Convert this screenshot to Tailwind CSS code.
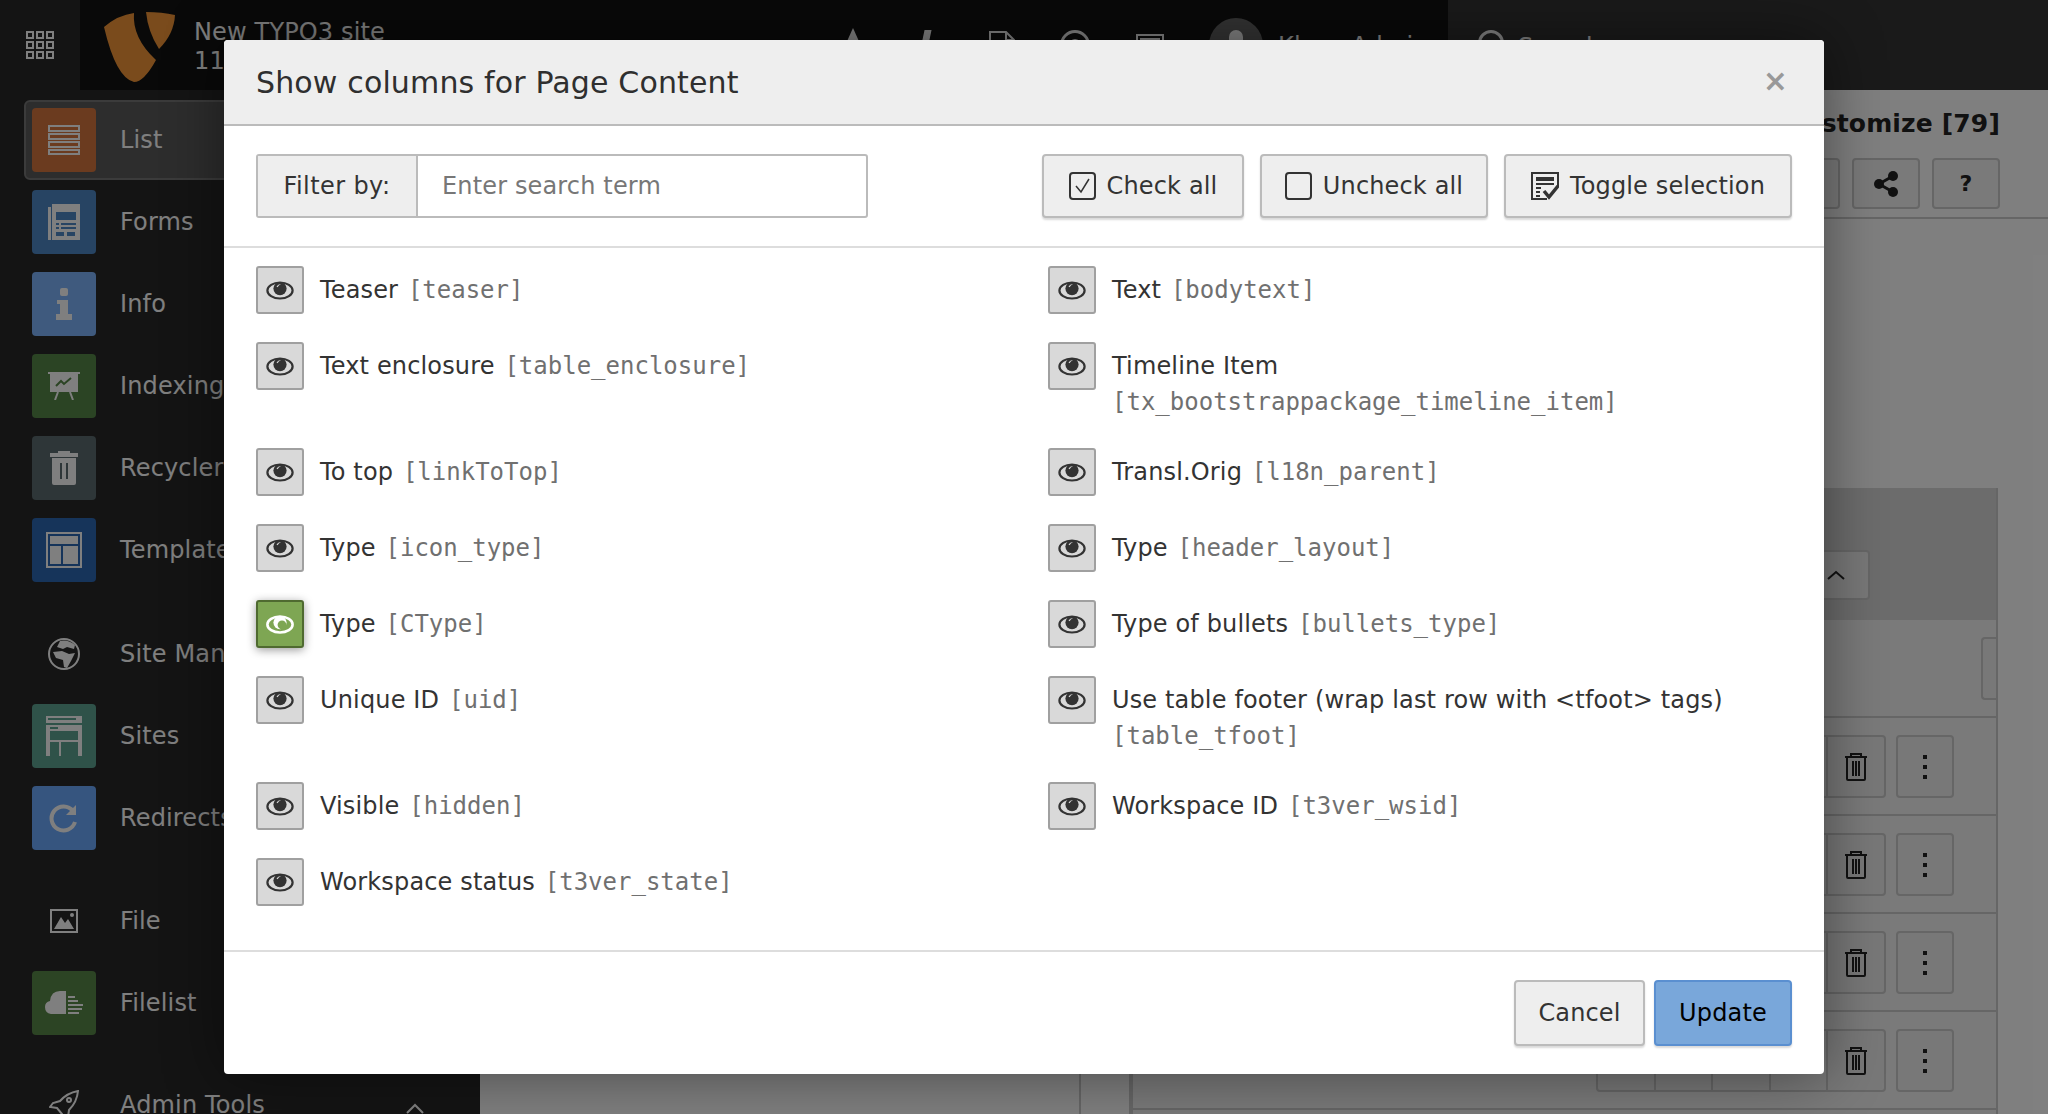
<!DOCTYPE html>
<html lang="en">
<head>
    <meta charset="UTF-8">
    <title>Show columns for Page Content</title>
    <script src="https://cdn.jsdelivr.net/npm/@tailwindcss/browser@4"></script>
</head>
<body class="font-['DejaVu_Sans',sans-serif] text-[24px] tracking-[0.15px] text-[#333] bg-white">
    <svg class="hidden">
        <symbol id="eye" viewBox="0 0 28 20">
            <ellipse cx="14" cy="10.5" rx="12.6" ry="8" fill="none" stroke="#333" stroke-width="2.2"/>
            <circle cx="14" cy="8.6" r="6.6" fill="#333"/>
            <path d="M10.5 6.6 Q12 3.8 15 3.9 Q12.4 5 11.6 7.2 Z" fill="#d9d9d9"/>
        </symbol>
    </svg>

    <div class="relative w-[2048px] h-[1114px] overflow-hidden flex flex-col">
        <!-- topbar -->
        <header class="h-[90px] flex shrink-0 text-white">
            <div class="w-[80px] bg-[#282828] flex items-center justify-center">
                <div class="grid grid-cols-3 gap-[2px] w-[28px]">
                    <i class="h-[8px] border-2 border-white"></i><i class="h-[8px] border-2 border-white"></i><i class="h-[8px] border-2 border-white"></i>
                    <i class="h-[8px] border-2 border-white"></i><i class="h-[8px] border-2 border-white"></i><i class="h-[8px] border-2 border-white"></i>
                    <i class="h-[8px] border-2 border-white"></i><i class="h-[8px] border-2 border-white"></i><i class="h-[8px] border-2 border-white"></i>
                </div>
            </div>
            <div class="w-[1368px] bg-[#121212] flex items-start relative">
                <svg class="ml-[24px] mt-[12px]" width="72" height="71" viewBox="0 0 72 71">
                    <path d="M0 15 Q14 3 30 1 Q28 26 52 48 Q40 70 30 70 Q12 66 0 15 Z" fill="#f49738"/>
                    <path d="M42 0 Q58 0 71 3 Q70 22 55 37 Q44 20 42 0 Z" fill="#f49738"/>
                </svg>
                <div class="ml-[18px] mt-[18px] leading-[29px]">
                    <div>New TYPO3 site</div>
                    <div>11.5.3</div>
                </div>
                <div class="absolute left-[0] top-0 h-full w-full pointer-events-none">
                    <div class="absolute left-[764px] top-[28px] w-0 h-0 border-x-[9px] border-x-transparent border-b-[20px] border-b-white"></div>
                    <div class="absolute left-[842px] top-[30px] w-[7px] h-[24px] bg-white -skew-x-12"></div>
                    <svg class="absolute left-[909px] top-[31px]" width="26" height="30" viewBox="0 0 26 30" fill="none" stroke="#fff" stroke-width="2"><path d="M1 1H17L25 9V29H1Z"/><path d="M17 1V9H25"/></svg>
                    <div class="absolute left-[980px] top-[30px] w-[30px] h-[30px] rounded-full border-[3px] border-white flex items-center justify-center"><span class="w-[12px] h-[12px] rounded-full bg-white"></span></div>
                    <div class="absolute left-[1056px] top-[34px] w-[28px] h-[24px] border-2 border-white"><span class="block mt-[2px] mx-[2px] h-[4px] bg-white"></span></div>
                    <div class="absolute left-[1129px] top-[18px] w-[54px] h-[54px] rounded-full bg-[#666] flex justify-center">
                        <span class="mt-[12px] w-[14px] h-[24px] rounded-full bg-white"></span>
                    </div>
                    <div class="absolute left-[1198px] top-[28px]">Klaus Admin</div>
                </div>
            </div>
            <div class="flex-1 bg-[#343434] flex items-start pl-[30px] pt-[30px] gap-[14px]">
                <span class="w-[26px] h-[26px] rounded-full border-[3px] border-white"></span>
                <span class="-mt-px">Search</span>
            </div>
        </header>

        <div class="flex flex-1 min-h-0">
            <!-- module menu -->
            <aside class="w-[480px] shrink-0 bg-[#282828] text-white pt-[9px] overflow-hidden flex flex-col *:shrink-0">
                <div class="h-[80px] my-px ml-6 pl-[6px] flex items-center gap-6 border-2 border-[#777] rounded-[6px] bg-[#5a5a5a]">
                    <span class="w-16 h-16 rounded-[4px] bg-[#d6763e] flex items-center justify-center">
                        <svg width="32" height="30" viewBox="0 0 32 30" fill="none" stroke="#fff" stroke-width="2"><rect x="1" y="1" width="30" height="5"/><rect x="1" y="9" width="30" height="5"/><rect x="1" y="17" width="30" height="5"/><rect x="1" y="25" width="30" height="4"/></svg>
                    </span>
                    List
                </div>
                <div class="h-[80px] my-px ml-6 pl-[6px] flex items-center gap-6 border-2 border-transparent">
                    <span class="w-16 h-16 rounded-[4px] bg-[#4e88c6] flex items-center justify-center">
                        <svg width="32" height="36" viewBox="0 0 32 36"><rect x="0" y="3" width="3" height="33" fill="#fff"/><rect x="4" y="0" width="28" height="36" fill="#fff"/><rect x="8" y="8" width="20" height="8" fill="#4e88c6"/><rect x="8" y="19" width="3" height="2" fill="#4e88c6"/><rect x="13" y="19" width="15" height="2" fill="#4e88c6"/><rect x="8" y="23" width="3" height="2" fill="#4e88c6"/><rect x="13" y="23" width="15" height="2" fill="#4e88c6"/><rect x="8" y="28" width="8" height="4" fill="#4e88c6"/><rect x="19" y="28" width="8" height="4" fill="#4e88c6"/></svg>
                    </span>
                    Forms
                </div>
                <div class="h-[80px] my-px ml-6 pl-[6px] flex items-center gap-6 border-2 border-transparent">
                    <span class="w-16 h-16 rounded-[4px] bg-[#7eb4fc] flex items-center justify-center">
                        <svg width="16" height="32" viewBox="0 0 16 32" fill="#fff"><rect x="4" y="0" width="8" height="8" rx="2"/><path d="M1 12H12V26H16V32H0V26H4V16H1Z"/></svg>
                    </span>
                    Info
                </div>
                <div class="h-[80px] my-px ml-6 pl-[6px] flex items-center gap-6 border-2 border-transparent">
                    <span class="w-16 h-16 rounded-[4px] bg-[#568849] flex items-center justify-center">
                        <svg width="32" height="28" viewBox="0 0 32 28"><rect x="0" y="0" width="32" height="2" fill="#fff"/><rect x="2" y="2" width="28" height="18" fill="#fff"/><path d="M8 14 L13 9 L16 12 L23 6" fill="none" stroke="#568849" stroke-width="2"/><path d="M10 20 L7 28 M22 20 L25 28" stroke="#fff" stroke-width="2"/></svg>
                    </span>
                    Indexing
                </div>
                <div class="h-[80px] my-px ml-6 pl-[6px] flex items-center gap-6 border-2 border-transparent">
                    <span class="w-16 h-16 rounded-[4px] bg-[#5c6c70] flex items-center justify-center">
                        <svg width="28" height="34" viewBox="0 0 28 34" fill="#fff"><path d="M8 0H20V2H28V6H0V2H8Z"/><path d="M2 7H26V32Q26 34 24 34H4Q2 34 2 32Z"/><rect x="10" y="12" width="2" height="16" fill="#5c6c70"/><rect x="16" y="12" width="2" height="16" fill="#5c6c70"/></svg>
                    </span>
                    Recycler
                </div>
                <div class="h-[80px] my-px ml-6 pl-[6px] flex items-center gap-6 border-2 border-transparent">
                    <span class="w-16 h-16 rounded-[4px] bg-[#2c68b4] flex items-center justify-center">
                        <svg width="36" height="36" viewBox="0 0 36 36"><rect x="1" y="1" width="34" height="34" fill="none" stroke="#fff" stroke-width="2"/><rect x="4" y="4" width="28" height="8" fill="#fff"/><rect x="4" y="14" width="11" height="18" fill="#fff"/><rect x="17" y="14" width="15" height="18" fill="#fff"/></svg>
                    </span>
                    Template
                </div>

                <div class="h-[80px] mt-[23px] mb-px ml-6 pl-[6px] flex items-center gap-6 border-2 border-transparent">
                    <span class="w-16 h-16 flex items-center justify-center">
                        <svg width="32" height="32" viewBox="0 0 32 32"><circle cx="16" cy="16" r="15" fill="none" stroke="#fff" stroke-width="2"/><path d="M12 3 Q20 1 27 7 L26 11 L19 9 L15 11 L9 9 Z M5 14 L14 13 L21 16 L27 15 L23 23 L19 30 L16 29 L15 22 L8 20 Z" fill="#fff"/></svg>
                    </span>
                    Site Management
                </div>
                <div class="h-[80px] my-px ml-6 pl-[6px] flex items-center gap-6 border-2 border-transparent">
                    <span class="w-16 h-16 rounded-[4px] bg-[#5ea492] flex items-center justify-center">
                        <svg width="36" height="40" viewBox="0 0 36 40"><rect x="0" y="0" width="36" height="7" fill="#fff"/><rect x="2" y="2" width="28" height="2" fill="#5ea492"/><rect x="0" y="9" width="36" height="6" fill="#fff"/><rect x="4" y="11" width="8" height="2" fill="#5ea492"/><rect x="0" y="15" width="4" height="25" fill="#fff"/><rect x="32" y="15" width="4" height="25" fill="#fff"/><rect x="4" y="24" width="28" height="2" fill="#fff"/><rect x="13" y="26" width="2" height="14" fill="#fff"/></svg>
                    </span>
                    Sites
                </div>
                <div class="h-[80px] my-px ml-6 pl-[6px] flex items-center gap-6 border-2 border-transparent">
                    <span class="w-16 h-16 rounded-[4px] bg-[#6caaff] flex items-center justify-center">
                        <svg width="30" height="30" viewBox="0 0 30 30"><path d="M24 8 A12 12 0 1 0 26 19" fill="none" stroke="#fff" stroke-width="4"/><path d="M27 2 V12 H17 Z" fill="#fff"/></svg>
                    </span>
                    Redirects
                </div>

                <div class="h-[80px] mt-[22px] mb-px ml-6 pl-[6px] flex items-center gap-6 border-2 border-transparent">
                    <span class="w-16 h-16 flex items-center justify-center">
                        <svg width="28" height="24" viewBox="0 0 28 24"><rect x="1" y="1" width="26" height="22" fill="none" stroke="#fff" stroke-width="2"/><circle cx="22" cy="6" r="2" fill="#fff"/><path d="M4 20 L11 8 L15 14 L18 10 L24 20 Z" fill="#fff"/></svg>
                    </span>
                    File
                </div>
                <div class="h-[80px] my-px ml-6 pl-[6px] flex items-center gap-6 border-2 border-transparent">
                    <span class="w-16 h-16 rounded-[4px] bg-[#588848] flex items-center justify-center">
                        <svg width="38" height="24" viewBox="0 0 38 24" fill="#fff"><path d="M21 0 V23 H6 Q0 22 0 16 Q0 11 5 10 Q6 0 15 0 Z"/><rect x="23" y="5" width="7" height="2"/><rect x="23" y="9" width="10" height="2"/><rect x="23" y="13" width="15" height="2"/><rect x="23" y="17" width="14" height="2"/><rect x="23" y="21" width="11" height="2"/></svg>
                    </span>
                    Filelist
                </div>
                <div class="h-[80px] mt-[21px] ml-6 pl-[6px] pr-[53px] flex items-center gap-6 border-2 border-transparent">
                    <span class="w-16 h-16 flex items-center justify-center">
                        <svg width="30" height="30" viewBox="0 0 30 30" fill="none" stroke="#fff" stroke-width="2"><path d="M29 1 Q18 3 11 11 L4 13 L1 17 L8 18 L13 24 L15 30 L19 27 L20 20 Q28 12 29 1 Z"/><circle cx="20" cy="10" r="2"/></svg>
                    </span>
                    Admin Tools
                    <svg class="ml-auto mt-[6px]" width="20" height="12" viewBox="0 0 20 12" fill="none" stroke="#fff" stroke-width="2"><path d="M2 11 L10 3 L18 11"/></svg>
                </div>
            </aside>

            <!-- content behind the modal -->
            <main class="flex-1 bg-white flex min-w-0">
                <div class="w-[601px] border-r-2 border-[#ccc] shrink-0"></div>
                <div class="w-[50px] border-r-2 border-[#ccc] shrink-0"></div>
                <div class="flex-1 flex flex-col min-w-0">
                    <div class="h-[129px] shrink-0 border-b-2 border-[#ccc] flex flex-col items-end pr-[48px] text-[#222] font-bold">
                        <div class="mt-[17px] leading-[34px] text-[25px]">Customize [79]</div>
                        <div class="mt-[17px] flex gap-3">
                            <span class="w-[68px] h-[51px] border-2 border-[#ccc] rounded-[4px] bg-[#f4f4f4]"></span>
                            <span class="w-[68px] h-[51px] border-2 border-[#ccc] rounded-[4px] bg-[#f4f4f4] flex items-center justify-center">
                                <svg width="26" height="26" viewBox="0 0 26 26" fill="#222"><circle cx="6" cy="13" r="5"/><circle cx="20" cy="5" r="5"/><circle cx="20" cy="21" r="5"/><path d="M6 13 L20 5 M6 13 L20 21" stroke="#222" stroke-width="3"/></svg>
                            </span>
                            <span class="w-[68px] h-[51px] border-2 border-[#ccc] rounded-[4px] bg-[#f4f4f4] flex items-center justify-center text-[22px]">?</span>
                        </div>
                    </div>
                    <div class="mr-[50px] mt-[269px] border-x-2 border-[#ccc] bg-[#f4f4f4] flex-1">
                        <div class="h-[132px] bg-[#d8d8d8] flex justify-end items-end pr-[126px] pb-[20px]">
                            <span class="w-[100px] h-[50px] border-2 border-[#ccc] rounded-[4px] bg-[#f0f0f0] flex items-center justify-end pr-[23px]">
                                <svg width="18" height="10" viewBox="0 0 18 10" fill="none" stroke="#222" stroke-width="2"><path d="M1 9 L9 2 L17 9"/></svg>
                            </span>
                        </div>
                        <div class="h-[98px] border-b-2 border-[#ccc] flex justify-end pt-[17px]">
                            <span class="w-[15px] h-[63px] border-2 border-r-0 border-[#ccc] rounded-l-[4px] bg-[#f0f0f0]"></span>
                        </div>
                        <div class="h-[98px] border-b-2 border-[#ccc] flex justify-end pt-[17px] pr-[42px]">
                            <div class="flex w-[290px] h-[63px] border-2 border-[#ccc] rounded-[4px] bg-[#f0f0f0] divide-x-2 divide-[#ccc]"><span class="flex-1"></span><span class="flex-1"></span><span class="flex-1"></span><span class="flex-1"></span><span class="flex-1 flex items-center justify-center"><svg width="24" height="28" viewBox="0 0 24 28" fill="none" stroke="#222" stroke-width="2"><path d="M1 4H23M7 4V1H17V4M3 4V26Q3 27 4 27H20Q21 27 21 26V4M9 8V23M12 8V23M15 8V23"/></svg></span></div>
                            <span class="ml-[10px] w-[58px] h-[63px] border-2 border-[#ccc] rounded-[4px] bg-[#f0f0f0] flex flex-col items-center justify-center gap-[6px]"><i class="w-[4px] h-[4px] bg-[#222]"></i><i class="w-[4px] h-[4px] bg-[#222]"></i><i class="w-[4px] h-[4px] bg-[#222]"></i></span>
                        </div>
                        <div class="h-[98px] border-b-2 border-[#ccc] flex justify-end pt-[17px] pr-[42px]">
                            <div class="flex w-[290px] h-[63px] border-2 border-[#ccc] rounded-[4px] bg-[#f0f0f0] divide-x-2 divide-[#ccc]"><span class="flex-1"></span><span class="flex-1"></span><span class="flex-1"></span><span class="flex-1"></span><span class="flex-1 flex items-center justify-center"><svg width="24" height="28" viewBox="0 0 24 28" fill="none" stroke="#222" stroke-width="2"><path d="M1 4H23M7 4V1H17V4M3 4V26Q3 27 4 27H20Q21 27 21 26V4M9 8V23M12 8V23M15 8V23"/></svg></span></div>
                            <span class="ml-[10px] w-[58px] h-[63px] border-2 border-[#ccc] rounded-[4px] bg-[#f0f0f0] flex flex-col items-center justify-center gap-[6px]"><i class="w-[4px] h-[4px] bg-[#222]"></i><i class="w-[4px] h-[4px] bg-[#222]"></i><i class="w-[4px] h-[4px] bg-[#222]"></i></span>
                        </div>
                        <div class="h-[98px] border-b-2 border-[#ccc] flex justify-end pt-[17px] pr-[42px]">
                            <div class="flex w-[290px] h-[63px] border-2 border-[#ccc] rounded-[4px] bg-[#f0f0f0] divide-x-2 divide-[#ccc]"><span class="flex-1"></span><span class="flex-1"></span><span class="flex-1"></span><span class="flex-1"></span><span class="flex-1 flex items-center justify-center"><svg width="24" height="28" viewBox="0 0 24 28" fill="none" stroke="#222" stroke-width="2"><path d="M1 4H23M7 4V1H17V4M3 4V26Q3 27 4 27H20Q21 27 21 26V4M9 8V23M12 8V23M15 8V23"/></svg></span></div>
                            <span class="ml-[10px] w-[58px] h-[63px] border-2 border-[#ccc] rounded-[4px] bg-[#f0f0f0] flex flex-col items-center justify-center gap-[6px]"><i class="w-[4px] h-[4px] bg-[#222]"></i><i class="w-[4px] h-[4px] bg-[#222]"></i><i class="w-[4px] h-[4px] bg-[#222]"></i></span>
                        </div>
                        <div class="h-[98px] border-b-2 border-[#ccc] flex justify-end pt-[17px] pr-[42px]">
                            <div class="flex w-[290px] h-[63px] border-2 border-[#ccc] rounded-[4px] bg-[#f0f0f0] divide-x-2 divide-[#ccc]"><span class="flex-1"></span><span class="flex-1"></span><span class="flex-1"></span><span class="flex-1"></span><span class="flex-1 flex items-center justify-center"><svg width="24" height="28" viewBox="0 0 24 28" fill="none" stroke="#222" stroke-width="2"><path d="M1 4H23M7 4V1H17V4M3 4V26Q3 27 4 27H20Q21 27 21 26V4M9 8V23M12 8V23M15 8V23"/></svg></span></div>
                            <span class="ml-[10px] w-[58px] h-[63px] border-2 border-[#ccc] rounded-[4px] bg-[#f0f0f0] flex flex-col items-center justify-center gap-[6px]"><i class="w-[4px] h-[4px] bg-[#222]"></i><i class="w-[4px] h-[4px] bg-[#222]"></i><i class="w-[4px] h-[4px] bg-[#222]"></i></span>
                        </div>
                    </div>
                </div>
            </main>
        </div>

        <!-- backdrop and modal -->
        <div class="absolute inset-0 bg-black/50"></div>
        <div class="absolute left-[224px] top-[40px] w-[1600px] h-[1034px] bg-white rounded-[4px] flex flex-col shadow-[0_0_60px_rgba(0,0,0,0.45)]">
            <div class="h-[86px] shrink-0 bg-[#eee] border-b-2 border-[#bbb] rounded-t-[4px] flex items-center justify-between pl-8 pr-[36px]">
                <h2 class="text-[30px] text-[#2f2f2f]">Show columns for Page Content</h2>
                <span class="-mt-[2px] text-[30px] font-bold text-[#999] leading-none">×</span>
            </div>

            <div class="h-[122px] shrink-0 border-b-2 border-[#ddd] flex items-center justify-between px-8">
                <div class="flex w-[612px] h-[64px] border-2 border-[#bbb] rounded-[3px]">
                    <span class="w-[160px] shrink-0 bg-[#eee] border-r-2 border-[#bbb] flex items-center justify-center tracking-[0.4px]">Filter by:</span>
                    <input class="flex-1 min-w-0 px-6 outline-none placeholder:text-[#777]" placeholder="Enter search term">
                </div>
                <div class="flex gap-[16px]">
                    <button class="h-[64px] w-[202px] bg-[#eee] border-2 border-[#bbb] rounded-[4px] shadow-[0_2px_2px_rgba(0,0,0,0.15)] flex items-center justify-center gap-[11px]">
                        <svg width="27" height="28" viewBox="0 0 27 28" fill="none" stroke="#333"><rect x="1" y="1" width="25" height="26" rx="3" stroke-width="2"/><path d="M7 14 L12 20 L20 7" stroke-width="1.5"/></svg>
                        Check all
                    </button>
                    <button class="h-[64px] w-[228px] bg-[#eee] border-2 border-[#bbb] rounded-[4px] shadow-[0_2px_2px_rgba(0,0,0,0.15)] flex items-center justify-center gap-[11px]">
                        <svg width="27" height="28" viewBox="0 0 27 28" fill="none" stroke="#333"><rect x="1" y="1" width="25" height="26" rx="3" stroke-width="2"/></svg>
                        Uncheck all
                    </button>
                    <button class="h-[64px] w-[288px] bg-[#eee] border-2 border-[#bbb] rounded-[4px] shadow-[0_2px_2px_rgba(0,0,0,0.15)] flex items-center justify-center gap-[11px]">
                        <svg width="28" height="28" viewBox="0 0 28 28"><path d="M16 27H1V1H27V15" fill="none" stroke="#333" stroke-width="2"/><rect x="5" y="5" width="18" height="4" fill="#333"/><rect x="5" y="11" width="18" height="2" fill="#333"/><path d="M5 16H10M5 20H9M5 24H9" stroke="#333" stroke-width="2"/><path d="M13 19 L18 25 L27 14" fill="none" stroke="#333" stroke-width="3.5"/></svg>
                        Toggle selection
                    </button>
                </div>
            </div>

            <div class="flex-1 min-h-0 pt-[18px] pl-8 grid grid-cols-[792px_1fr] content-start">
                <label class="flex gap-4 pb-[28px]">
                    <span class="w-12 h-12 shrink-0 border-2 border-[#a0a0a0] rounded-[3px] bg-[#d9d9d9] flex items-center justify-center"><svg width="28" height="20"><use href="#eye"/></svg></span>
                    <span class="pt-[6px] leading-9">Teaser <span class="ml-[2px] font-['DejaVu_Sans_Mono',monospace] tracking-normal text-[#707070]">[teaser]</span></span>
                </label>
                <label class="flex gap-4 pb-[28px]">
                    <span class="w-12 h-12 shrink-0 border-2 border-[#a0a0a0] rounded-[3px] bg-[#d9d9d9] flex items-center justify-center"><svg width="28" height="20"><use href="#eye"/></svg></span>
                    <span class="pt-[6px] leading-9">Text <span class="ml-[2px] font-['DejaVu_Sans_Mono',monospace] tracking-normal text-[#707070]">[bodytext]</span></span>
                </label>
                <label class="flex gap-4 pb-[28px]">
                    <span class="w-12 h-12 shrink-0 border-2 border-[#a0a0a0] rounded-[3px] bg-[#d9d9d9] flex items-center justify-center"><svg width="28" height="20"><use href="#eye"/></svg></span>
                    <span class="pt-[6px] leading-9">Text enclosure <span class="ml-[2px] font-['DejaVu_Sans_Mono',monospace] tracking-normal text-[#707070]">[table_enclosure]</span></span>
                </label>
                <label class="flex gap-4 pb-[28px]">
                    <span class="w-12 h-12 shrink-0 border-2 border-[#a0a0a0] rounded-[3px] bg-[#d9d9d9] flex items-center justify-center"><svg width="28" height="20"><use href="#eye"/></svg></span>
                    <span class="pt-[6px] leading-9">Timeline Item <span class="block font-['DejaVu_Sans_Mono',monospace] tracking-normal text-[#707070]">[tx_bootstrappackage_timeline_item]</span></span>
                </label>
                <label class="flex gap-4 pb-[28px]">
                    <span class="w-12 h-12 shrink-0 border-2 border-[#a0a0a0] rounded-[3px] bg-[#d9d9d9] flex items-center justify-center"><svg width="28" height="20"><use href="#eye"/></svg></span>
                    <span class="pt-[6px] leading-9">To top <span class="ml-[2px] font-['DejaVu_Sans_Mono',monospace] tracking-normal text-[#707070]">[linkToTop]</span></span>
                </label>
                <label class="flex gap-4 pb-[28px]">
                    <span class="w-12 h-12 shrink-0 border-2 border-[#a0a0a0] rounded-[3px] bg-[#d9d9d9] flex items-center justify-center"><svg width="28" height="20"><use href="#eye"/></svg></span>
                    <span class="pt-[6px] leading-9">Transl.Orig <span class="ml-[2px] font-['DejaVu_Sans_Mono',monospace] tracking-normal text-[#707070]">[l18n_parent]</span></span>
                </label>
                <label class="flex gap-4 pb-[28px]">
                    <span class="w-12 h-12 shrink-0 border-2 border-[#a0a0a0] rounded-[3px] bg-[#d9d9d9] flex items-center justify-center"><svg width="28" height="20"><use href="#eye"/></svg></span>
                    <span class="pt-[6px] leading-9">Type <span class="ml-[2px] font-['DejaVu_Sans_Mono',monospace] tracking-normal text-[#707070]">[icon_type]</span></span>
                </label>
                <label class="flex gap-4 pb-[28px]">
                    <span class="w-12 h-12 shrink-0 border-2 border-[#a0a0a0] rounded-[3px] bg-[#d9d9d9] flex items-center justify-center"><svg width="28" height="20"><use href="#eye"/></svg></span>
                    <span class="pt-[6px] leading-9">Type <span class="ml-[2px] font-['DejaVu_Sans_Mono',monospace] tracking-normal text-[#707070]">[header_layout]</span></span>
                </label>
                <label class="flex gap-4 pb-[28px]">
                    <span class="w-12 h-12 shrink-0 border-2 border-[#4f6a30] rounded-[3px] bg-[#7ea653] shadow-[0_2px_10px_rgba(0,0,0,0.4)] flex items-center justify-center">
                        <svg width="28" height="20" viewBox="0 0 28 20"><ellipse cx="14" cy="10.5" rx="12.6" ry="8" fill="none" stroke="#fff" stroke-width="2.6"/><circle cx="14" cy="8.6" r="6.6" fill="#fff"/><circle cx="16" cy="10.8" r="4.4" fill="#7ea653"/></svg>
                    </span>
                    <span class="pt-[6px] leading-9">Type <span class="ml-[2px] font-['DejaVu_Sans_Mono',monospace] tracking-normal text-[#707070]">[CType]</span></span>
                </label>
                <label class="flex gap-4 pb-[28px]">
                    <span class="w-12 h-12 shrink-0 border-2 border-[#a0a0a0] rounded-[3px] bg-[#d9d9d9] flex items-center justify-center"><svg width="28" height="20"><use href="#eye"/></svg></span>
                    <span class="pt-[6px] leading-9">Type of bullets <span class="ml-[2px] font-['DejaVu_Sans_Mono',monospace] tracking-normal text-[#707070]">[bullets_type]</span></span>
                </label>
                <label class="flex gap-4 pb-[28px]">
                    <span class="w-12 h-12 shrink-0 border-2 border-[#a0a0a0] rounded-[3px] bg-[#d9d9d9] flex items-center justify-center"><svg width="28" height="20"><use href="#eye"/></svg></span>
                    <span class="pt-[6px] leading-9">Unique ID <span class="ml-[2px] font-['DejaVu_Sans_Mono',monospace] tracking-normal text-[#707070]">[uid]</span></span>
                </label>
                <label class="flex gap-4 pb-[28px]">
                    <span class="w-12 h-12 shrink-0 border-2 border-[#a0a0a0] rounded-[3px] bg-[#d9d9d9] flex items-center justify-center"><svg width="28" height="20"><use href="#eye"/></svg></span>
                    <span class="pt-[6px] leading-9">Use table footer (wrap last row with &lt;tfoot&gt; tags) <span class="block font-['DejaVu_Sans_Mono',monospace] tracking-normal text-[#707070]">[table_tfoot]</span></span>
                </label>
                <label class="flex gap-4 pb-[28px]">
                    <span class="w-12 h-12 shrink-0 border-2 border-[#a0a0a0] rounded-[3px] bg-[#d9d9d9] flex items-center justify-center"><svg width="28" height="20"><use href="#eye"/></svg></span>
                    <span class="pt-[6px] leading-9">Visible <span class="ml-[2px] font-['DejaVu_Sans_Mono',monospace] tracking-normal text-[#707070]">[hidden]</span></span>
                </label>
                <label class="flex gap-4 pb-[28px]">
                    <span class="w-12 h-12 shrink-0 border-2 border-[#a0a0a0] rounded-[3px] bg-[#d9d9d9] flex items-center justify-center"><svg width="28" height="20"><use href="#eye"/></svg></span>
                    <span class="pt-[6px] leading-9">Workspace ID <span class="ml-[2px] font-['DejaVu_Sans_Mono',monospace] tracking-normal text-[#707070]">[t3ver_wsid]</span></span>
                </label>
                <label class="flex gap-4 pb-[28px]">
                    <span class="w-12 h-12 shrink-0 border-2 border-[#a0a0a0] rounded-[3px] bg-[#d9d9d9] flex items-center justify-center"><svg width="28" height="20"><use href="#eye"/></svg></span>
                    <span class="pt-[6px] leading-9">Workspace status <span class="ml-[2px] font-['DejaVu_Sans_Mono',monospace] tracking-normal text-[#707070]">[t3ver_state]</span></span>
                </label>
            </div>

            <div class="h-[124px] shrink-0 border-t-2 border-[#ddd] flex justify-end items-start pt-[28px] pr-8 gap-[9px]">
                <button class="w-[131px] h-[66px] bg-[#eee] border-2 border-[#bbb] rounded-[4px] shadow-[0_2px_2px_rgba(0,0,0,0.15)]">Cancel</button>
                <button class="w-[138px] h-[66px] bg-[#79a7da] border-2 border-[#5a8fd0] rounded-[4px] text-black shadow-[0_2px_2px_rgba(0,0,0,0.15)]">Update</button>
            </div>
        </div>
    </div>
</body>
</html>
